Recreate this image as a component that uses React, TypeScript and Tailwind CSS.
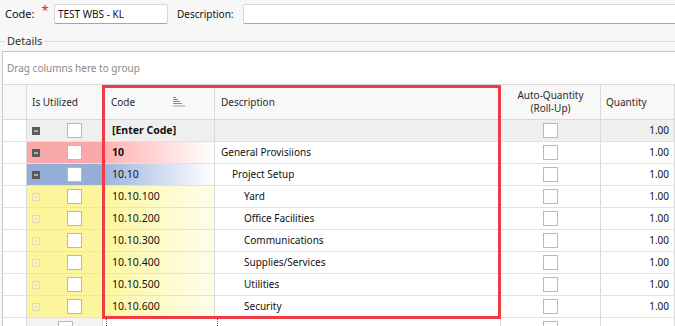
import React from "react";

type Row = {
  code: string;
  desc: string;
  level: number;
  kind: "new" | "l1" | "l2" | "l3";
};

const rows: Row[] = [
  { code: "[Enter Code]", desc: "", level: 0, kind: "new" },
  { code: "10", desc: "General Provisiions", level: 0, kind: "l1" },
  { code: "10.10", desc: "Project Setup", level: 1, kind: "l2" },
  { code: "10.10.100", desc: "Yard", level: 2, kind: "l3" },
  { code: "10.10.200", desc: "Office Facilities", level: 2, kind: "l3" },
  { code: "10.10.300", desc: "Communications", level: 2, kind: "l3" },
  { code: "10.10.400", desc: "Supplies/Services", level: 2, kind: "l3" },
  { code: "10.10.500", desc: "Utilities", level: 2, kind: "l3" },
  { code: "10.10.600", desc: "Security", level: 2, kind: "l3" },
];

const utilBg: Record<Row["kind"], string> = {
  new: "bg-[#efefef]",
  l1: "bg-[#f9a9a9]",
  l2: "bg-[#94aed8]",
  l3: "bg-[#fcf59e]",
};

const codeBg: Record<Row["kind"], string> = {
  new: "bg-[#efefef]",
  l1: "bg-gradient-to-r from-[#ffb0b0] to-white",
  l2: "bg-gradient-to-r from-[#9cb5de] to-white",
  l3: "bg-gradient-to-r from-[#fdf69f] to-[#fffdeb]",
};

const descPad = ["pl-[6px]", "pl-[17px]", "pl-[29px]"];

function Checkbox() {
  return <div className="w-[15px] h-[15px] bg-white border border-[#b9b9b9]" />;
}

function Toggle({ open }: { open: boolean }) {
  if (open) {
    return (
      <svg width="8" height="8" viewBox="0 0 8 8" className="shrink-0">
        <rect x="0" y="0" width="8" height="8" fill="#5b5b5b" />
        <rect x="2" y="3.5" width="4" height="1" fill="#fff" />
      </svg>
    );
  }
  return (
    <svg width="8" height="8" viewBox="0 0 8 8" className="shrink-0">
      <rect x="0.5" y="0.5" width="7" height="7" fill="#fbf6b4" stroke="#e2ddb0" />
      <rect x="2" y="3.5" width="4" height="1" fill="#e4dfb4" />
      <rect x="3.5" y="2" width="1" height="4" fill="#e4dfb4" />
    </svg>
  );
}

function SortIcon() {
  return (
    <svg width="12" height="10" viewBox="0 0 12 10" className="ml-auto mr-[29px]">
      <rect x="0" y="0" width="3" height="1" fill="#8a8a8a" />
      <rect x="0" y="2" width="5" height="1" fill="#8a8a8a" />
      <rect x="0" y="4" width="7" height="1" fill="#8a8a8a" />
      <rect x="0" y="6" width="9" height="1" fill="#8a8a8a" />
      <rect x="0" y="8.5" width="12" height="1" fill="#a0a0a0" />
    </svg>
  );
}

export default function App() {
  return (
    <div className="relative w-[675px] h-[326px] overflow-hidden bg-[#f7f7f7] text-[10px] text-[#111] font-['Noto_Sans',sans-serif]">
      {/* header fields */}
      <div className="flex items-center h-[20px] mt-[4px]">
        <div className="flex w-[54px] h-full pl-[5px]">
          <span className="self-center text-[11px]">Code:</span>
          <span className="ml-[7px] mt-0 text-[13px] leading-none text-[#e8201e]">*</span>
        </div>
        <div className="w-[114px] h-full bg-white border border-[#d7d7d7] border-b-[#a5a5a5] rounded-[2px] pl-[3px] flex items-center">
          TEST WBS - KL
        </div>
        <span className="ml-[9px] w-[66px]">Description:</span>
        <div className="flex-1 h-full bg-white border border-[#d7d7d7] border-b-[#a5a5a5] rounded-[2px] -mr-[4px]" />
      </div>

      {/* Details group line */}
      <div className="flex items-center h-[13px] mt-[11px]">
        <div className="w-[5px] h-px bg-[#dcdcdc]" />
        <span className="px-[2px] text-[#333] text-[11px]">Details</span>
        <div className="flex-1 h-px bg-[#dcdcdc]" />
      </div>

      {/* grid */}
      <div className="mt-[3px] ml-[2px] bg-white border-l border-t border-[#c9c9c9]">
        <div className="h-[32px] flex items-center pl-[4px] text-[#8a8a8a]">Drag columns here to group</div>

        <div className="flex h-[36px] border-y border-[#d9d9d9] bg-[#f8f8f8] text-[#2b2b2b]">
          <div className="w-[24px] border-r border-[#d9d9d9]" />
          <div className="w-[76px] border-r border-[#d9d9d9] pl-[5px] flex items-center">Is Utilized</div>
          <div className="w-[112px] border-r border-[#d9d9d9] pl-[8px] flex items-center">
            <span>Code</span>
            <SortIcon />
          </div>
          <div className="w-[286px] border-r border-[#d9d9d9] pl-[6px] flex items-center">Description</div>
          <div className="w-[100px] border-r border-[#d9d9d9] flex flex-col items-center justify-center leading-[13px]">
            <span>Auto-Quantity</span>
            <span>(Roll-Up)</span>
          </div>
          <div className="flex-1 border-r border-[#d9d9d9] pl-[5px] flex items-center">Quantity</div>
        </div>

        {rows.map((r) => {
          const rowBg = r.kind === "new" ? "bg-[#efefef]" : "bg-white";
          return (
            <div key={r.code} className="flex h-[22px] border-b border-[#e1e1e1]">
              <div className="w-[24px] border-r border-[#d9d9d9] bg-white" />
              <div className={`w-[76px] border-r border-[#d9d9d9] pl-[5px] flex items-center ${utilBg[r.kind]}`}>
                <Toggle open={r.kind !== "l3"} />
                <div className="ml-[27px]">
                  <Checkbox />
                </div>
              </div>
              <div
                className={`w-[112px] border-r border-[#d9d9d9] pl-[9px] flex items-center text-[10.5px] ${codeBg[r.kind]} ${
                  r.kind === "new" || r.kind === "l1" ? "font-bold" : ""
                }`}
              >
                {r.code}
              </div>
              <div className={`w-[286px] border-r border-[#d9d9d9] flex items-center ${rowBg} ${descPad[r.level]}`}>
                {r.desc}
              </div>
              <div className={`w-[100px] border-r border-[#d9d9d9] flex items-center justify-center ${rowBg}`}>
                <Checkbox />
              </div>
              <div className={`flex-1 border-r border-[#d9d9d9] flex items-center justify-end pr-[5px] ${rowBg}`}>
                1.00
              </div>
            </div>
          );
        })}

        {/* footer row, partly visible */}
        <div className="flex h-[22px]">
          <div className="w-[24px] border-r border-[#d9d9d9] bg-white" />
          <div className="w-[76px] border-r border-[#d9d9d9] bg-[#f3f3f3] pl-[31px] pt-[3px]">
            <Checkbox />
          </div>
          <div className="w-[112px] border-r border-dotted border-[#555] ml-[3px] bg-white border-l" />
          <div className="w-[283px] border-r border-[#d9d9d9] bg-white" />
          <div className="w-[100px] border-r border-[#d9d9d9] flex justify-center pt-[3px]">
            <Checkbox />
          </div>
          <div className="flex-1 border-r border-[#d9d9d9]" />
        </div>
      </div>

      {/* highlight annotation */}
      <div className="absolute left-[102px] top-[85px] w-[399px] h-[234px] border-[3px] border-[#ef3b45] pointer-events-none" />
    </div>
  );
}
